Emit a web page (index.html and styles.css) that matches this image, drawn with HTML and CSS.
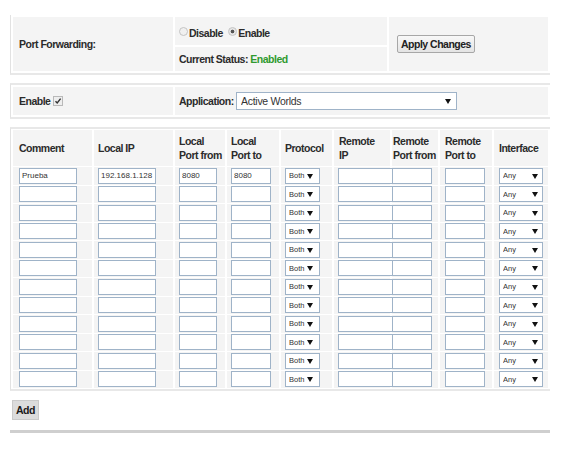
FILE: index.html
```html
<!DOCTYPE html>
<html lang="en">
<head>
    <meta charset="UTF-8">
    <title>Port Forwarding</title>
    <link rel="stylesheet" href="styles.css">
</head>
<body>
    <div class="box box-first">
        <table class="grid">
            <colgroup><col style="width:160px"><col style="width:212px"><col></colgroup>
            <tr>
                <td rowspan="2" class="label">Port Forwarding:</td>
                <td class="radios">
                    <label><input type="radio" name="pf"><span>Disable</span></label>
                    <label><input type="radio" name="pf" checked><span>Enable</span></label>
                </td>
                <td rowspan="2" class="apply"><button class="btn">Apply Changes</button></td>
            </tr>
            <tr>
                <td class="status label">Current Status: <span class="on">Enabled</span></td>
            </tr>
        </table>
    </div>

    <div class="box">
        <table class="grid">
            <colgroup><col style="width:160px"><col></colgroup>
            <tr class="app-row">
                <td class="label">Enable <span class="check"><svg width="8" height="8" viewBox="0 0 8 8"><path d="M1.5 4.2 L3.2 6 L6.6 1.6" fill="none" stroke="#333" stroke-width="1.4"/></svg></span></td>
                <td class="label app">Application: <span class="sel sel-app"><select><option>Active Worlds</option></select></span></td>
            </tr>
        </table>
    </div>

    <div class="box box-last">
        <table class="grid rules" id="rules">
            <colgroup>
                <col style="width:79px"><col style="width:79px"><col style="width:50px">
                <col style="width:52px"><col style="width:51px"><col style="width:56px">
                <col style="width:46px"><col style="width:52px"><col style="width:54px">
            </colgroup>
            <tr class="head">
                <th>Comment</th>
                <th>Local IP</th>
                <th>Local<br>Port from</th>
                <th>Local<br>Port to</th>
                <th>Protocol</th>
                <th>Remote<br>IP</th>
                <th>Remote<br>Port from</th>
                <th>Remote<br>Port to</th>
                <th>Interface</th>
            </tr>
        </table>
    </div>

    <button class="btn btn-add">Add</button>
    <div class="bar"></div>

    <script>
        // First rule is filled in, the rest are empty
        const rules = document.getElementById('rules');
        const first = ['Prueba', '192.168.1.128', '8080', '8080'];

        for (let i = 0; i < 12; i++) {
            const vals = i === 0 ? first : ['', '', '', ''];
            const row = document.createElement('tr');
            row.className = 'rule';
            row.innerHTML =
                '<td><input class="t-comment" value="' + vals[0] + '"></td>' +
                '<td><input class="t-ip" value="' + vals[1] + '"></td>' +
                '<td><input class="t-port" value="' + vals[2] + '"></td>' +
                '<td><input class="t-port2" value="' + vals[3] + '"></td>' +
                '<td><span class="sel sel-proto"><select><option>Both</option><option>TCP</option><option>UDP</option></select></span></td>' +
                '<td><input class="t-rip"></td>' +
                '<td><input class="t-rport"></td>' +
                '<td><input class="t-rport2"></td>' +
                '<td><span class="sel sel-if"><select><option>Any</option></select></span></td>';
            rules.appendChild(row);
        }
    </script>
</body>
</html>
```

FILE: styles.css
```css
body {
    margin: 0;
    padding: 15px 0 0 10px;
    background-color: #fff;
    color: #2b2b2b;
    font-family: "Liberation Sans", Arial, sans-serif;
    font-size: 10.5px;
    letter-spacing: -0.5px;
}

.box {
    width: 540px;
    box-sizing: border-box;
    border-left: 1px solid #e2e2e2;
    border-top: 2px solid #e8e8e8;
    border-bottom: 2px solid #e8e8e8;
    margin-bottom: 8px;
}

.box-first {
    border-top: none;
}

.box-last {
    margin-bottom: 9px;
}

.grid {
    width: 100%;
    table-layout: fixed;
    border-collapse: separate;
    border-spacing: 2px;
}

.grid td,
.grid th {
    background-color: #f4f4f4;
    padding: 0 0 0 6px;
    vertical-align: middle;
}

.label {
    font-weight: bold;
}

.radios {
    height: 28px;
    font-weight: bold;
    padding: 4px 0 0 4px !important;
    box-sizing: border-box;
}

.radios label {
    margin-right: 3px;
}

.radios input {
    appearance: none;
    width: 9px;
    height: 9px;
    margin: 0 1px 0 0;
    border: 1px solid #c4c4c4;
    border-radius: 50%;
    background-color: #f0f0f0;
    vertical-align: 1px;
}

.radios input:checked {
    background: radial-gradient(circle, #555 0, #555 1.5px, #e6e6e6 2.2px);
}

.status {
    height: 24px;
    padding-left: 4px !important;
}

.on {
    color: #2f9a2f;
}

.apply {
    padding-left: 8px !important;
}

.btn {
    font-family: inherit;
    font-size: 10.5px;
    letter-spacing: -0.5px;
    font-weight: bold;
    white-space: nowrap;
    color: #222;
    background: linear-gradient(#f8f8f8, #e4e4e4);
    border: 1px solid #a7a7a7;
    border-radius: 2px;
    padding: 0;
    height: 18px;
    width: 78px;
}

.app-row td {
    height: 28px;
}

.app {
    padding-left: 4px !important;
}

.check {
    display: inline-block;
    width: 8px;
    height: 8px;
    border: 1px solid #b9b9b9;
    background-color: #eee;
    vertical-align: 0;
    line-height: 0;
}

.sel {
    position: relative;
    display: inline-block;
    letter-spacing: 0;
}

.sel::after {
    content: "";
    position: absolute;
    top: 50%;
    margin-top: -2px;
    border-left: 3px solid transparent;
    border-right: 3px solid transparent;
    border-top: 5px solid #111;
    pointer-events: none;
}

select {
    appearance: none;
    font-family: inherit;
    color: #333;
    background-color: #fff;
    border: 1px solid #9fb3c8;
    border-radius: 0;
    margin: 0;
}

.sel-app select {
    width: 221px;
    height: 18px;
    font-size: 10.5px;
    letter-spacing: -0.3px;
    padding: 0 0 0 4px;
}

.sel-app::after {
    right: 6px;
}

.rules th {
    height: 36px;
    text-align: left;
    font-weight: bold;
    line-height: 14px;
    padding-left: 5px;
}

.rules th:nth-child(1) {
    padding-left: 6px;
}

.rules th:nth-child(2),
.rules th:nth-child(3),
.rules th:nth-child(4),
.rules th:nth-child(5) {
    padding-left: 4px;
}

.rules th:nth-child(7),
.rules td:nth-child(7) {
    padding-left: 1px;
}

.grid.rules {
    border-spacing: 2px 1px;
}

.rule td {
    height: 17.5px;
    padding: 0 0 0 4px;
    line-height: 0;
    white-space: nowrap;
}

.rule td:nth-child(1) {
    padding-left: 6px;
}

.rule td:nth-child(8),
.rule td:nth-child(9) {
    padding-left: 5px;
}

.rule input {
    box-sizing: border-box;
    height: 16px;
    margin: 0;
    padding: 0 0 0 2px;
    border: 1px solid #9fb3c8;
    font-family: "Liberation Sans", Arial, sans-serif;
    font-size: 8px;
    letter-spacing: 0;
    color: #333;
    background-color: #fff;
}

.rule .t-comment { width: 58px; }
.rule .t-ip { width: 58px; }
.rule .t-port { width: 38px; }
.rule .t-port2 { width: 40px; }
.rule .t-rip { width: 55px; }
.rule .t-rport { width: 40px; margin-left: -1px; }
.rule .t-rport2 { width: 40px; }

.sel-proto select,
.sel-if select {
    box-sizing: border-box;
    height: 16px;
    font-family: "Liberation Sans", Arial, sans-serif;
    font-size: 7.5px;
    padding: 0 0 0 3px;
}

.sel-proto select {
    width: 35px;
}

.sel-proto::after {
    right: 7px;
}

.sel-if select {
    width: 44px;
}

.sel-if::after {
    right: 5px;
}

.btn-add {
    display: block;
    width: 27px;
    height: 20px;
    margin: 0 0 10px 2px;
    background: #dcdcdc;
    border: 1px solid #cacaca;
    border-radius: 0;
    color: #1a1a1a;
}

.bar {
    width: 540px;
    height: 3px;
    background-color: #cfcfcf;
}
```
